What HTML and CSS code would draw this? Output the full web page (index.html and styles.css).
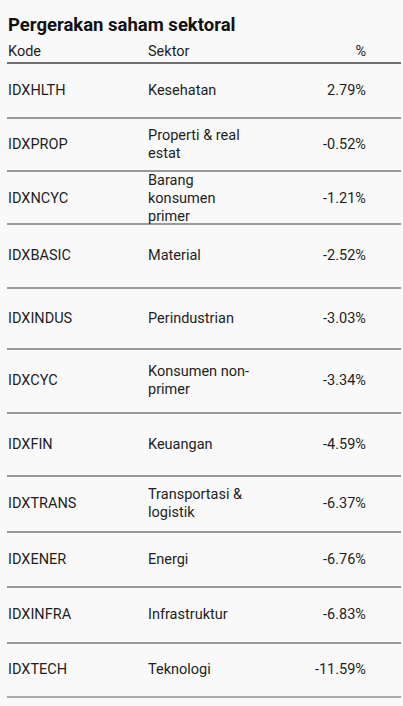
FILE: index.html
```html
<!DOCTYPE html>
<html lang="id">
<head>
<meta charset="utf-8">
<link rel="stylesheet" href="styles.css">
</head>
<body>
<div class="table">
  <h1 class="title">Pergerakan saham sektoral</h1>
  <div class="row head">
    <div class="c code">Kode</div>
    <div class="c sector">Sektor</div>
    <div class="c pct">%</div>
  </div>
  <div class="rows">
    <div class="row"><div class="c code">IDXHLTH</div><div class="c sector">Kesehatan</div><div class="c pct">2.79%</div></div>
    <div class="row"><div class="c code">IDXPROP</div><div class="c sector">Properti &amp; real<br>estat</div><div class="c pct">-0.52%</div></div>
    <div class="row"><div class="c code">IDXNCYC</div><div class="c sector">Barang<br>konsumen<br>primer</div><div class="c pct">-1.21%</div></div>
    <div class="row"><div class="c code">IDXBASIC</div><div class="c sector">Material</div><div class="c pct">-2.52%</div></div>
    <div class="row"><div class="c code">IDXINDUS</div><div class="c sector">Perindustrian</div><div class="c pct">-3.03%</div></div>
    <div class="row"><div class="c code">IDXCYC</div><div class="c sector">Konsumen non-<br>primer</div><div class="c pct">-3.34%</div></div>
    <div class="row"><div class="c code">IDXFIN</div><div class="c sector">Keuangan</div><div class="c pct">-4.59%</div></div>
    <div class="row"><div class="c code">IDXTRANS</div><div class="c sector">Transportasi &amp;<br>logistik</div><div class="c pct">-6.37%</div></div>
    <div class="row"><div class="c code">IDXENER</div><div class="c sector">Energi</div><div class="c pct">-6.76%</div></div>
    <div class="row"><div class="c code">IDXINFRA</div><div class="c sector">Infrastruktur</div><div class="c pct">-6.83%</div></div>
    <div class="row last"><div class="c code">IDXTECH</div><div class="c sector">Teknologi</div><div class="c pct">-11.59%</div></div>
  </div>
</div>
</body>
</html>
```
FILE: styles.css
```css
html, body {
  margin: 0;
  padding: 0;
  background: #f9f9f9;
}
body {
  font-family: Roboto, "Liberation Sans", sans-serif;
  color: #1e1e1e;
}
.table {
  margin: 0 2px 0 7px;
  padding-top: 15px;
}
.title {
  margin: 0;
  padding-left: 1px;
  font-size: 18.5px;
  line-height: 20px;
  font-weight: 700;
  color: #111;
}
.row {
  display: grid;
  grid-template-columns: 140px 1fr 100px;
  align-items: center;
  border-bottom: 2px solid #9a9a9a;
  font-size: 14.5px;
  line-height: 18px;
}
.head {
  height: 29px;
  align-items: end;
  padding-bottom: 1px;
  box-sizing: border-box;
  border-bottom-color: #6f6f6f;
}
.rows {
  display: grid;
  grid-template-rows: 55px 53px 53px 64px 61px 64px 63px 56px 55px 56px 54px;
}
.rows .row {
  box-sizing: border-box;
}
.row.last {
  border-bottom-color: #aaaaaa;
}
.c {
  padding-left: 1px;
}
.pct {
  text-align: right;
  padding-right: 35px;
}
```
